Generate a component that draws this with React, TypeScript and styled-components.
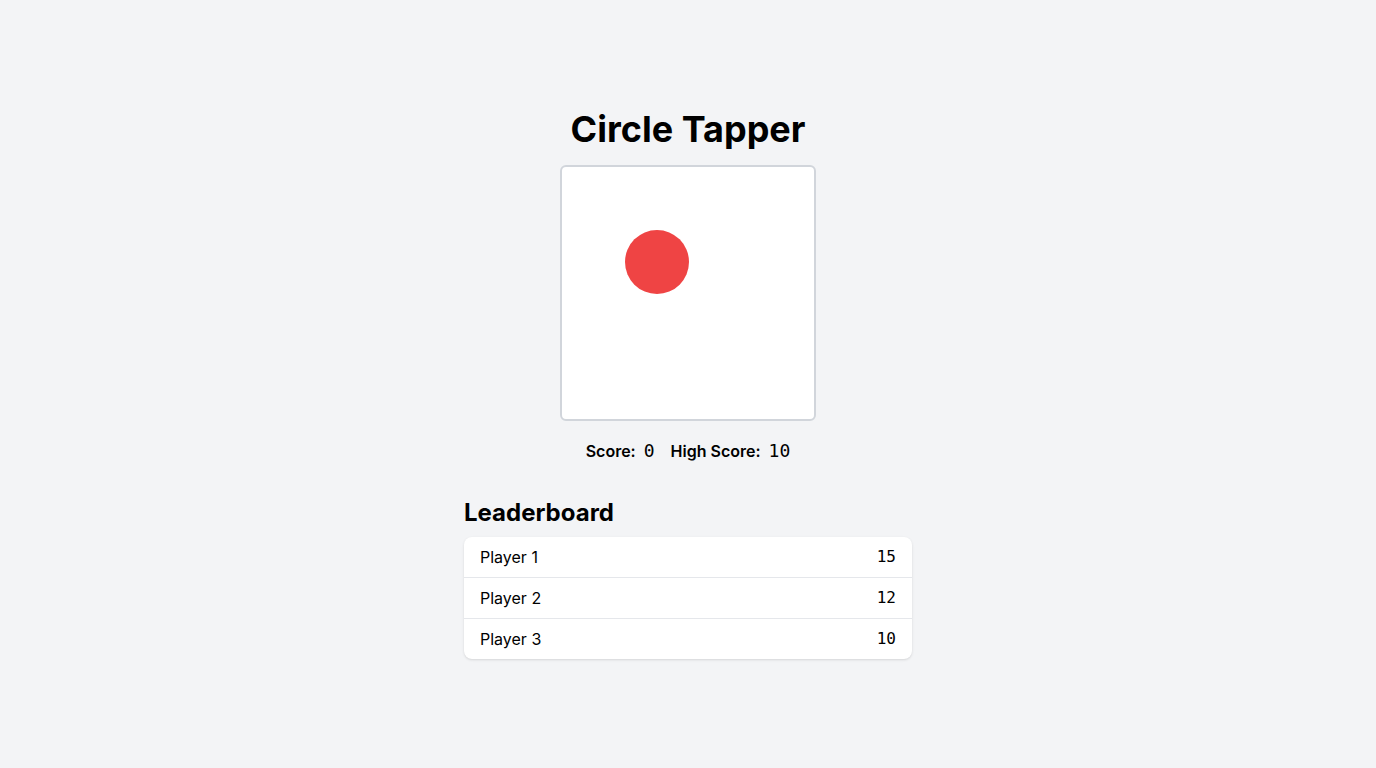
import * as React from 'react';
import styled, { createGlobalStyle } from 'styled-components';

const GlobalStyle = createGlobalStyle`
  * {
    box-sizing: border-box;
  }
  body {
    margin: 0;
    background: #f3f4f6;
    font-family: Inter, 'Noto Sans', sans-serif;
    color: #000;
  }
`;

const Page = styled.div`
  min-height: 100vh;
  display: flex;
  flex-direction: column;
  align-items: center;
  justify-content: center;
`;

const Title = styled.h1`
  margin: 0 0 16px;
  font-size: 36px;
  line-height: 40px;
  font-weight: 700;
`;

const Board = styled.div`
  position: relative;
  width: 256px;
  height: 256px;
  background: #fff;
  border: 2px solid #d1d5db;
  border-radius: 6px;
  overflow: hidden;
`;

const Target = styled.button`
  position: absolute;
  width: 64px;
  height: 64px;
  padding: 0;
  border: none;
  border-radius: 50%;
  background: #ef4444;
  cursor: pointer;
`;

const ScoreLine = styled.div`
  margin-top: 16px;
  display: flex;
  align-items: baseline;
  gap: 16px;
  height: 28px;
  line-height: 28px;
`;

const Stat = styled.span`
  font-size: 16px;
  font-weight: 600;
`;

const StatValue = styled.span`
  margin-left: 4px;
  font-family: 'DejaVu Sans Mono', 'Liberation Mono', monospace;
  font-size: 18px;
  font-weight: 400;
  line-height: 1;
`;

const Leaderboard = styled.section`
  width: 100%;
  max-width: 448px;
  margin-top: 32px;
`;

const Heading = styled.h2`
  margin: 0 0 8px;
  font-size: 24px;
  line-height: 32px;
  font-weight: 700;
`;

const List = styled.ul`
  margin: 0;
  padding: 0;
  list-style: none;
  background: #fff;
  border-radius: 8px;
  box-shadow: 0 1px 3px rgba(0, 0, 0, 0.1), 0 1px 2px -1px rgba(0, 0, 0, 0.1);
  overflow: hidden;
`;

const Row = styled.li`
  display: flex;
  justify-content: space-between;
  align-items: center;
  padding: 8px 16px;
  font-size: 16px;
  line-height: 24px;
  & + & {
    border-top: 1px solid #e5e7eb;
  }
`;

const RowScore = styled.span`
  font-family: 'DejaVu Sans Mono', 'Liberation Mono', monospace;
  font-size: 16px;
`;

const leaders = [
  { name: 'Player 1', score: 15 },
  { name: 'Player 2', score: 12 },
  { name: 'Player 3', score: 10 },
];

export default function App() {
  const [score, setScore] = React.useState(0);
  const [pos, setPos] = React.useState({ x: 63, y: 63 });
  const highScore = Math.max(10, score);

  const tap = () => {
    setScore(score + 1);
    setPos({ x: Math.floor(Math.random() * 188), y: Math.floor(Math.random() * 188) });
  };

  return (
    <Page>
      <GlobalStyle />
      <Title>Circle Tapper</Title>
      <Board>
        <Target aria-label="circle" onClick={tap} style={{ left: pos.x, top: pos.y }} />
      </Board>
      <ScoreLine>
        <Stat>
          Score: <StatValue>{score}</StatValue>
        </Stat>
        <Stat>
          High Score: <StatValue>{highScore}</StatValue>
        </Stat>
      </ScoreLine>
      <Leaderboard>
        <Heading>Leaderboard</Heading>
        <List>
          {leaders.map((p) => (
            <Row key={p.name}>
              <span>{p.name}</span>
              <RowScore>{p.score}</RowScore>
            </Row>
          ))}
        </List>
      </Leaderboard>
    </Page>
  );
}
